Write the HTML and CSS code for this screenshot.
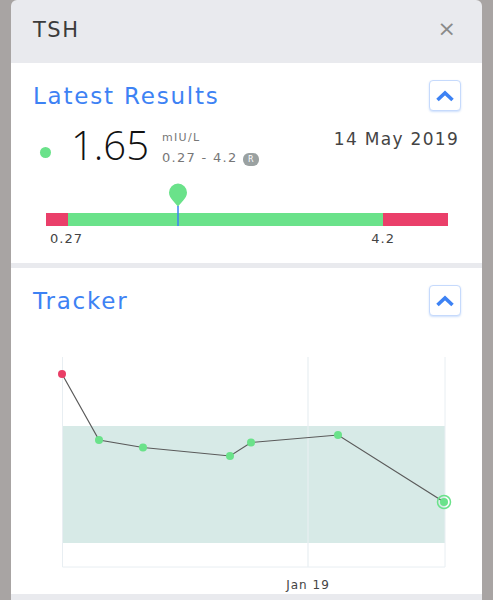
FILE: index.html
```html
<!DOCTYPE html>
<html lang="en">
<head>
    <meta charset="UTF-8">
    <meta name="viewport" content="width=device-width, initial-scale=1.0">
    <title>TSH</title>
    <link rel="stylesheet" href="styles.css">
</head>
<body>
    <div class="modal">
        <header class="modal-head">
            <h1>TSH</h1>
            <span class="close">&times;</span>
        </header>

        <section class="panel panel-results">
            <div class="panel-head">
                <h2>Latest Results</h2>
                <button class="toggle" type="button">
                    <svg width="20" height="12" viewBox="0 0 20 12"><path d="M2.5 10 L10 3 L17.5 10" fill="none" stroke="#3d82f4" stroke-width="3.6"/></svg>
                </button>
            </div>

            <div class="result">
                <span class="dot"></span>
                <span class="value">1.65</span>
                <div class="meta">
                    <div class="unit">mIU/L</div>
                    <div class="range">0.27 - 4.2 <span class="badge">R</span></div>
                </div>
                <div class="date">14 May 2019</div>
            </div>

            <div class="scale">
                <div class="pin" style="left: 132px">
                    <svg width="20" height="44" viewBox="0 0 20 44"><path d="M10 24 C7.5 19.5 1 15.5 1 9.5 A9 9 0 0 1 19 9.5 C19 15.5 12.5 19.5 10 24 Z" fill="#6ae28a"/><line x1="10" y1="23" x2="10" y2="43" stroke="#3d82f4" stroke-width="1.5"/></svg>
                </div>
                <div class="bar">
                    <span class="low"></span>
                    <span class="normal"></span>
                    <span class="high"></span>
                </div>
                <div class="ticks">
                    <span>0.27</span>
                    <span>4.2</span>
                </div>
            </div>
        </section>

        <section class="panel panel-tracker">
            <div class="panel-head">
                <h2>Tracker</h2>
                <button class="toggle" type="button">
                    <svg width="20" height="12" viewBox="0 0 20 12"><path d="M2.5 10 L10 3 L17.5 10" fill="none" stroke="#3d82f4" stroke-width="3.6"/></svg>
                </button>
            </div>

            <svg class="chart" width="427" height="270" viewBox="0 0 427 270">
                <rect x="29.5" y="102" width="382.5" height="117" fill="#d7eae7"/>
                <line x1="29.5" y1="33" x2="29.5" y2="243" stroke="#e8eef2" stroke-width="1"/>
                <line x1="275" y1="33" x2="275" y2="243" stroke="#e8eef2" stroke-width="1.2"/>
                <line x1="412" y1="33" x2="412" y2="243" stroke="#e8eef2" stroke-width="1"/>
                <line x1="29.5" y1="243" x2="412" y2="243" stroke="#e8eef2" stroke-width="1"/>
                <polyline points="29,50 66,116 110,123.5 197,132 218,118.5 305,111 411,178" fill="none" stroke="#5a5a5a" stroke-width="1.2"/>
                <circle cx="29" cy="50" r="4" fill="#e93e66"/>
                <circle cx="66" cy="116" r="4" fill="#6ae28a"/>
                <circle cx="110" cy="123.5" r="4" fill="#6ae28a"/>
                <circle cx="197" cy="132" r="4" fill="#6ae28a"/>
                <circle cx="218" cy="118.5" r="4" fill="#6ae28a"/>
                <circle cx="305" cy="111" r="4" fill="#6ae28a"/>
                <circle cx="411" cy="178" r="6.5" fill="none" stroke="#6ae28a" stroke-width="1.5"/>
                <circle cx="411" cy="178" r="4" fill="#6ae28a"/>
                <text x="275" y="265" text-anchor="middle" class="axis-label">Jan 19</text>
            </svg>
        </section>

        <div class="panel-gap"></div>
    </div>
</body>
</html>
```

FILE: styles.css
```css
body {
    margin: 0;
    background-color: #a8a4a3;
    font-family: "DejaVu Sans", Arial, sans-serif;
    color: #333;
}

.modal {
    margin: 0 11px;
    background-color: #e9eaee;
    border-radius: 6px 6px 0 0;
    overflow: hidden;
}

.modal-head {
    height: 63px;
    display: flex;
    align-items: center;
    justify-content: space-between;
    padding: 0 26px 0 22px;
    box-sizing: border-box;
}

.modal-head h1 {
    margin: 0 0 3px 0;
    font-size: 21px;
    font-weight: normal;
    color: #3b3b3b;
    letter-spacing: 1.5px;
}

.close {
    font-size: 22px;
    color: #8a8a8a;
    margin-bottom: 6px;
}

.panel {
    background-color: white;
    padding: 17px 21px 0 22px;
    box-sizing: border-box;
}

.panel-results {
    height: 200px;
}

.panel-tracker {
    height: 326px;
    margin-top: 5px;
}

.panel-gap {
    height: 6px;
}

.panel-head {
    display: flex;
    align-items: center;
    justify-content: space-between;
    height: 31px;
}

.panel-head h2 {
    margin: 0;
    font-size: 23px;
    font-weight: normal;
    color: #3d82f4;
    letter-spacing: 1.8px;
}

.toggle {
    width: 32px;
    height: 31px;
    padding: 0;
    border: 1.5px solid #c6dafc;
    border-radius: 4px;
    background-color: white;
    box-shadow: 0 1px 2px rgba(61, 130, 244, 0.25);
    display: flex;
    align-items: center;
    justify-content: center;
}

.result {
    display: flex;
    align-items: flex-start;
    margin-top: 11px;
    height: 52px;
}

.dot {
    width: 11px;
    height: 11px;
    border-radius: 50%;
    background-color: #6ae28a;
    margin: 25px 0 0 7px;
}

.value {
    font-family: "Open Sans", "DejaVu Sans", sans-serif;
    font-size: 40px;
    font-weight: 300;
    color: #111;
    margin-left: 20px;
    line-height: 46px;
}

.meta {
    margin-left: 13px;
    color: #777;
    letter-spacing: 1.3px;
}

.unit {
    font-size: 11px;
    margin-top: 9px;
}

.range {
    font-size: 13px;
    margin-top: 6px;
}

.badge {
    display: inline-block;
    background-color: #9aa1a1;
    color: white;
    font-size: 8px;
    border-radius: 6px;
    padding: 2px 5px;
    vertical-align: 0;
    letter-spacing: 0;
}

.date {
    margin-left: auto;
    margin-right: 2px;
    font-size: 17px;
    color: #444;
    letter-spacing: 1.3px;
    margin-top: 7px;
}

.scale {
    position: relative;
    margin: 9px 13px 0 13px;
    padding-top: 30px;
}

.pin {
    position: absolute;
    top: 0;
    margin-left: -10px;
}

.bar {
    display: flex;
    height: 13px;
}

.low {
    width: 22px;
    background-color: #ea3f6a;
}

.normal {
    width: 315px;
    background-color: #6ae28a;
}

.high {
    flex: 1;
    background-color: #ea3f6a;
}

.ticks {
    display: flex;
    justify-content: space-between;
    padding: 5px 53px 0 4px;
    font-size: 13px;
    color: #444;
    letter-spacing: 1px;
}

.chart {
    display: block;
    margin-top: 8px;
}

.axis-label {
    font-family: "DejaVu Sans", Arial, sans-serif;
    font-size: 12px;
    fill: #444;
    letter-spacing: 1px;
}
```
